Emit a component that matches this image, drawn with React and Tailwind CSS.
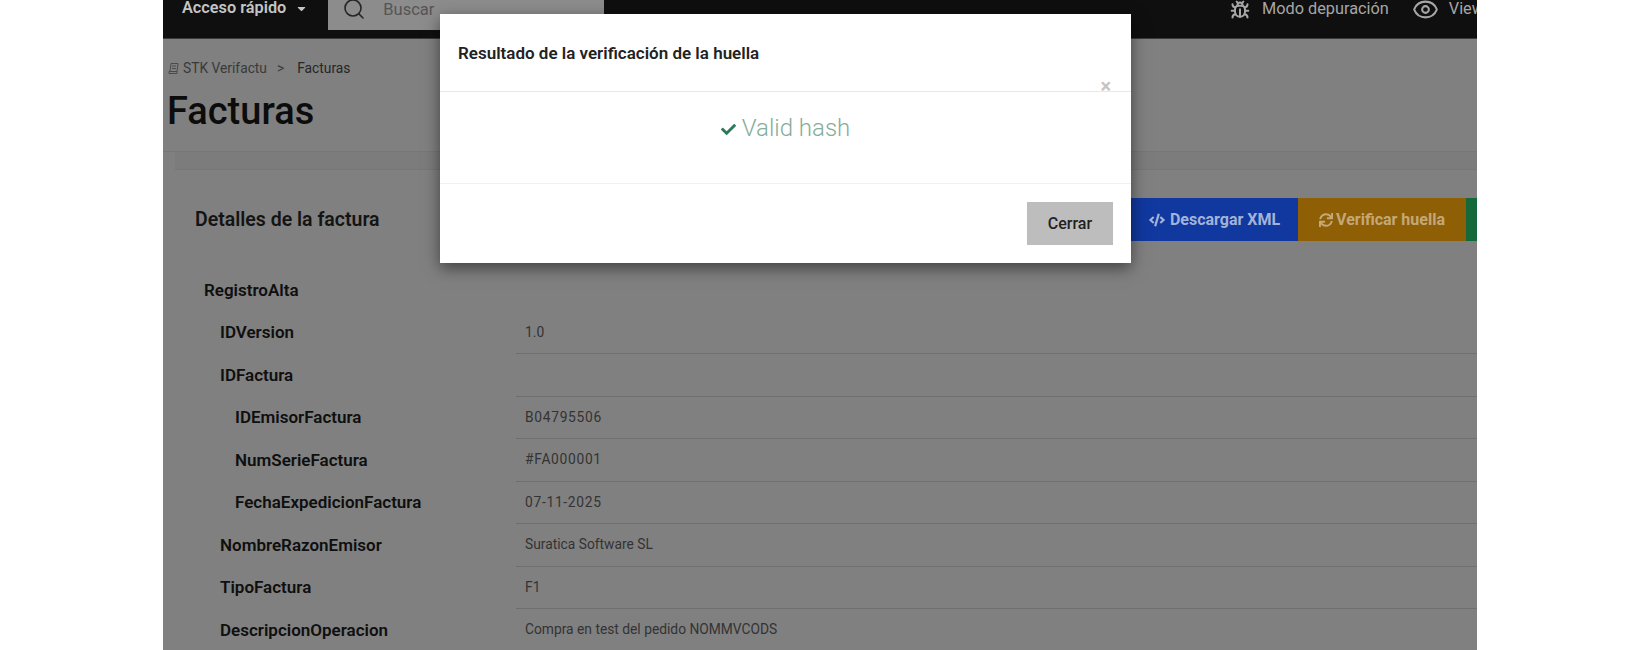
import { Search, Bug, Eye } from 'lucide-react'
import { FaCheck, FaCode, FaSync, FaCaretDown } from 'react-icons/fa'

const rows = [
  { label: 'RegistroAlta', indent: 'pl-[41px]', head: true },
  { label: 'IDVersion', value: '1.0', indent: 'pl-[57px]' },
  { label: 'IDFactura', value: '', indent: 'pl-[57px]' },
  { label: 'IDEmisorFactura', value: 'B04795506', indent: 'pl-[72px]', digits: true },
  { label: 'NumSerieFactura', value: '#FA000001', indent: 'pl-[72px]', digits: true },
  { label: 'FechaExpedicionFactura', value: '07-11-2025', indent: 'pl-[72px]', digits: true },
  { label: 'NombreRazonEmisor', value: 'Suratica Software SL', indent: 'pl-[57px]' },
  { label: 'TipoFactura', value: 'F1', indent: 'pl-[57px]' },
  { label: 'DescripcionOperacion', value: 'Compra en test del pedido NOMMVCODS', indent: 'pl-[57px]' },
]

function App() {
  return (
    <div className="relative h-[650px] w-full overflow-hidden bg-white font-['Roboto',sans-serif]">
      <div className="ml-[163px] h-full w-[1314px] overflow-hidden bg-[#808080]">

        {/* Top bar */}
        <div className="flex h-[39px] items-start whitespace-nowrap bg-[#0f0f0f] border-b border-[#3a3a3a]">
          <div className="flex h-[17px] items-center pl-[19px] text-[#c4c4c4]">
            <span className="text-[16.3px] font-semibold">Acceso rápido</span>
            <FaCaretDown className="ml-[9px] text-[13px]" />
          </div>
          <div className="ml-[20px] flex h-[30px] w-[276px] items-start bg-[#8c8c8c] pl-[14px]">
            <Search size={24} strokeWidth={1.6} className="-mt-[3px] text-[#262626]" />
            <span className="ml-[17px] text-[16.5px] leading-[19px] text-[#555555]">Buscar</span>
          </div>
          <div className="ml-auto flex h-[19px] w-[247px] items-center overflow-hidden text-[#a6a6a6]">
            <Bug size={20} strokeWidth={2.4} className="shrink-0" />
            <span className="ml-[12px] text-[16.3px]">Modo depuración</span>
            <Eye size={27} strokeWidth={1.8} className="ml-[23px] shrink-0" />
            <span className="ml-[10px] text-[16.3px]">View</span>
          </div>
        </div>

        {/* Breadcrumb and title */}
        <div className="mt-[18px] flex h-[22px] items-center pl-[5px] text-[13.8px] text-[#3a3a3a]">
          <svg width="12" height="13" viewBox="0 0 12 13" fill="none" stroke="#4a4a4a" strokeWidth="1">
            <path d="M3 1.5h7l-1 8H2zM1 9.5h8v2H1zM4 4h4M4 6.5h4" />
          </svg>
          <span className="ml-[3px]">STK Verifactu</span>
          <span className="ml-[10px]">&gt;</span>
          <span className="ml-[13px] text-[#262626]">Facturas</span>
        </div>
        <h1 className="mt-[10px] pl-[4px] text-[38px] leading-[44px] font-medium text-[#0c0c0c]">Facturas</h1>

        {/* Band above the card */}
        <div className="mt-[18px] border-t border-[#777777]">
          <div className="ml-[12px] h-[18px] border-b border-[#777777] bg-[#7c7c7c]" />
        </div>

        {/* Details card */}
        <div className="flex h-[70px] items-center justify-between pl-[32px] pt-[29px]">
          <h2 className="text-[19.5px] font-semibold text-[#141414]">Detalles de la factura</h2>
          <div className="flex text-[16px] font-bold">
            <div className="flex h-[43px] w-[167px] items-center justify-center gap-[5px] bg-[#10389f] text-[#a3b3d8]">
              <FaCode className="text-[16px]" />
              Descargar XML
            </div>
            <div className="flex h-[43px] w-[168px] items-center justify-center gap-[3px] bg-[#8f5f05] text-[#c4a878]">
              <FaSync className="text-[14px]" />
              Verificar huella
            </div>
            <div className="h-[43px] w-[11px] bg-[#14683a]" />
          </div>
        </div>

        <div className="mt-[29px]">
          {rows.map((row) => (
            <div key={row.label} className="grid h-[42.5px] grid-cols-[353px_1fr]">
              <div className={`flex items-center text-[17px] font-semibold text-[#0f0f0f] ${row.indent}`}>
                {row.label}
              </div>
              <div className={`flex items-center pl-[9px] text-[13.8px] text-[#333333] ${row.head ? '' : 'border-b border-[#6f6f6f]'} ${row.digits ? 'tracking-[0.7px]' : ''}`}>
                {row.value}
              </div>
            </div>
          ))}
        </div>
      </div>

      {/* Modal */}
      <div className="absolute left-[440px] top-[14px] h-[249px] w-[691px] bg-white shadow-[0_5px_15px_rgba(0,0,0,0.5)]">
        <div className="relative h-[78px] border-b border-[#e8e8e8] pl-[18px] pt-[28px]">
          <h3 className="text-[17px] leading-[22px] font-semibold text-[#222222]">Resultado de la verificación de la huella</h3>
          <span className="absolute right-[20px] bottom-[-5px] text-[20px] leading-[20px] font-bold text-[#c4c4c4]">×</span>
        </div>
        <div className="flex h-[92px] items-start justify-center border-b border-[#f0f0f0] pt-[21px]">
          <div className="flex items-center text-[#86ad9a]">
            <FaCheck className="mr-[6px] mt-[3px] text-[15px] text-[#2c7a57]" />
            <span className="text-[24px] leading-[30px] font-light">Valid hash</span>
          </div>
        </div>
        <div className="flex justify-end pr-[18px] pt-[18px]">
          <button className="h-[43px] w-[86px] bg-[#bdbdbd] text-[16px] font-medium text-[#222222]">Cerrar</button>
        </div>
      </div>
    </div>
  )
}

export default App
